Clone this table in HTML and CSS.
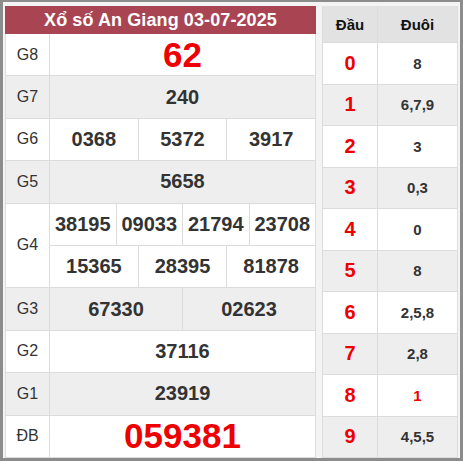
FILE: index.html
```html
<!DOCTYPE html>
<html lang="vi">
<head>
<meta charset="utf-8">
<title>Xổ số An Giang 03-07-2025</title>
<link rel="stylesheet" href="styles.css">
</head>
<body>
<div class="frame">
  <div class="lt">
    <div class="title">Xổ số An Giang 03-07-2025</div>

    <div class="lbl">G8</div>
    <div class="vals"><div class="v big">62</div></div>

    <div class="lbl alt">G7</div>
    <div class="vals alt"><div class="v">240</div></div>

    <div class="lbl">G6</div>
    <div class="vals"><div class="v">0368</div><div class="v">5372</div><div class="v">3917</div></div>

    <div class="lbl alt">G5</div>
    <div class="vals alt"><div class="v">5658</div></div>

    <div class="lbl g4">G4</div>
    <div class="vals"><div class="v">38195</div><div class="v">09033</div><div class="v">21794</div><div class="v">23708</div></div>
    <div class="vals"><div class="v">15365</div><div class="v">28395</div><div class="v">81878</div></div>

    <div class="lbl alt">G3</div>
    <div class="vals alt"><div class="v">67330</div><div class="v">02623</div></div>

    <div class="lbl">G2</div>
    <div class="vals"><div class="v">37116</div></div>

    <div class="lbl alt">G1</div>
    <div class="vals alt"><div class="v">23919</div></div>

    <div class="lbl last">ĐB</div>
    <div class="vals last"><div class="v big">059381</div></div>
  </div>

  <div class="rt">
    <div class="th">Đầu</div><div class="th">Đuôi</div>
    <div class="hd">0</div><div class="tl">8</div>
    <div class="hd alt">1</div><div class="tl alt">6,7,9</div>
    <div class="hd">2</div><div class="tl">3</div>
    <div class="hd alt">3</div><div class="tl alt">0,3</div>
    <div class="hd">4</div><div class="tl">0</div>
    <div class="hd alt">5</div><div class="tl alt">8</div>
    <div class="hd">6</div><div class="tl">2,5,8</div>
    <div class="hd alt">7</div><div class="tl alt">2,8</div>
    <div class="hd">8</div><div class="tl red">1</div>
    <div class="hd alt last">9</div><div class="tl alt last">4,5,5</div>
  </div>
</div>
</body>
</html>
```

FILE: styles.css
```css
html, body {
  margin: 0;
  padding: 0;
}
body {
  width: 463px;
  height: 461px;
  font-family: "Liberation Sans", Arial, sans-serif;
  background: #f4f4f4;
}
.frame {
  box-sizing: border-box;
  width: 463px;
  height: 461px;
  border: 2px solid #8c8c8c;
  border-left-width: 3px;
  border-right-width: 3px;
  border-bottom-width: 3px;
  padding: 4px 2px 0 2px;
  display: flex;
  gap: 6px;
  background: #f4f4f4;
}
.lt {
  width: 311px;
  box-sizing: border-box;
  display: grid;
  grid-template-columns: 44px 1fr;
  grid-template-rows: 28px repeat(10, 1fr);
  border-left: 1px solid #dcdcdc;
  border-right: 1px solid #dcdcdc;
  background: #fff;
}
.title {
  grid-column: 1 / 3;
  margin-left: -1px;
  margin-right: -1px;
  background: #a94553;
  color: #fff;
  font-weight: bold;
  font-size: 18px;
  display: flex;
  align-items: center;
  justify-content: center;
  letter-spacing: 0.1px;
}
.lbl {
  border-right: 1px solid #dcdcdc;
  border-bottom: 1px solid #dcdcdc;
  display: flex;
  align-items: center;
  justify-content: center;
  font-size: 16px;
  color: #333;
  background: #fff;
}
.lbl.g4 {
  grid-row: span 2;
}
.vals {
  display: flex;
  border-bottom: 1px solid #dcdcdc;
  background: #fff;
}
.alt {
  background: #eee;
}
.v {
  flex: 1 1 0;
  display: flex;
  align-items: center;
  justify-content: center;
  font-size: 20px;
  font-weight: bold;
  color: #333;
}
.v + .v {
  border-left: 1px solid #dcdcdc;
}
.v.big {
  font-size: 35px;
  color: #ee0000;
}
.rt {
  width: 136px;
  box-sizing: border-box;
  display: grid;
  grid-template-columns: 55px 1fr;
  grid-template-rows: 37px repeat(10, 1fr);
  border-left: 1px solid #dcdcdc;
  border-right: 1px solid #dcdcdc;
  background: #fff;
}
.th, .hd, .tl {
  display: flex;
  align-items: center;
  justify-content: center;
  border-bottom: 1px solid #dcdcdc;
  background: #fff;
}
.th, .hd {
  border-right: 1px solid #dcdcdc;
}
.th:nth-child(2) {
  border-right: 0;
}
.th {
  background: #e2e2e2;
  font-weight: bold;
  font-size: 15px;
  color: #111;
}
.hd {
  font-size: 20px;
  font-weight: bold;
  color: #ee0000;
}
.tl {
  font-size: 15px;
  font-weight: bold;
  color: #333;
}
.tl.red {
  color: #ee0000;
}
.hd.alt, .tl.alt {
  background: #eee;
}
```
